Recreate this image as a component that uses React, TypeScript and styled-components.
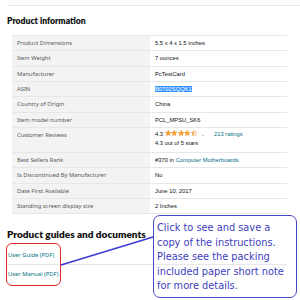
import styled, { createGlobalStyle } from 'styled-components';

const GlobalStyle = createGlobalStyle`
  html, body {
    margin: 0;
    padding: 0;
    background: #fff;
  }
`;

const Page = styled.div`
  position: relative;
  width: 300px;
  height: 300px;
  overflow: hidden;
  box-sizing: border-box;
  padding: 5px 0 0 7px;
  font-family: "Noto Sans", "Open Sans", sans-serif;
`;

const TopRule = styled.div`
  border-top: 1px solid #e7e7e7;
`;

const SectionTitle = styled.h2`
  margin: 9px 0 0;
  font-family: Lato, "Noto Sans", sans-serif;
  font-size: 8.6px;
  line-height: 12px;
  font-weight: 800;
  color: #0f1111;
`;

const GuidesTitle = styled.h2`
  margin: 13px 0 0;
  font-family: Lato, "Noto Sans", sans-serif;
  font-size: 10px;
  line-height: 14px;
  font-weight: 800;
  color: #0f1111;
`;

const Table = styled.div`
  margin: 8px 0 0 5px;
  width: 275px;
  border-top: 1px solid #e7e7e7;
`;

const Row = styled.div<{ $tall?: boolean }>`
  display: grid;
  grid-template-columns: 138px 1fr;
  height: ${(p) => (p.$tall ? '24px' : '14.33px')};
  border-bottom: 1px solid #e7e7e7;
`;

const Label = styled.div`
  background: #f3f3f3;
  color: #565959;
  font-size: 5.8px;
  line-height: 14.33px;
  padding-left: 5px;
  white-space: nowrap;
`;

const Value = styled.div`
  font-family: "Liberation Sans", Arial, sans-serif;
  font-size: 5.8px;
  line-height: 14.33px;
  color: #0f1111;
  padding-left: 5px;
  white-space: nowrap;
`;

const Selected = styled.span`
  background: #3390ff;
  color: #fff;
`;

const Link = styled.a`
  color: #007185;
  text-decoration: none;
`;

const ReviewLine = styled.div`
  display: flex;
  align-items: center;
  gap: 2px;
  height: 9px;
  margin-top: 2px;
`;

const SubLine = styled.div`
  line-height: 9px;
`;

const Chevron = styled.span`
  color: #888;
  font-size: 5px;
  margin: 0 7px 0 2px;
`;

const Guides = styled.div`
  margin-top: 5px;
  width: 280px;
`;

const GuideItem = styled.div<{ $first?: boolean }>`
  font-size: 5.8px;
  line-height: 18px;
  padding-left: 1px;
  border-bottom: ${(p) => (p.$first ? '1px solid #e7e7e7' : 'none')};
`;

const RedBox = styled.div`
  position: absolute;
  left: 6px;
  top: 243px;
  width: 53px;
  height: 41px;
  border: 1.6px solid #e3262b;
  border-radius: 6px;
`;

const Callout = styled.div`
  position: absolute;
  left: 153px;
  top: 215px;
  width: 144px;
  height: 83px;
  border: 1.6px solid #4747c9;
  border-radius: 7px;
  padding: 5px 0 0 3px;
  box-sizing: border-box;
  font-family: "DejaVu Sans", Verdana, sans-serif;
  font-size: 9.8px;
  line-height: 14.5px;
  color: #3d3dbd;
  white-space: nowrap;
`;

const Overlay = styled.svg`
  position: absolute;
  left: 0;
  top: 0;
  pointer-events: none;
`;

const Star = ({ fill }: { fill: number }) => (
  <svg width="6.4" height="6" viewBox="0 0 20 19">
    <defs>
      <linearGradient id={`s${fill}`}>
        <stop offset={`${fill * 100}%`} stopColor="#ffa41c" />
        <stop offset={`${fill * 100}%`} stopColor="#fff" />
      </linearGradient>
    </defs>
    <polygon
      points="10,1 12.6,7 19,7.3 14,11.5 15.7,18 10,14.3 4.3,18 6,11.5 1,7.3 7.4,7"
      fill={`url(#s${fill})`}
      stroke="#de7921"
      strokeWidth="1.2"
    />
  </svg>
);

const rows: [string, React.ReactNode][] = [
  ['Product Dimensions', '5.5 x 4 x 1.5 inches'],
  ['Item Weight', '7 ounces'],
  ['Manufacturer', 'PcTestCard'],
  ['ASIN', <Selected>B0702SQQK1</Selected>],
  ['Country of Origin', 'China'],
  ['Item model number', 'PCL_MPSU_SK6'],
];

const rowsAfter: [string, React.ReactNode][] = [
  ['Best Sellers Rank', <>#370 in <Link>Computer Motherboards</Link></>],
  ['Is Discontinued By Manufacturer', 'No'],
  ['Date First Available', 'June 10, 2017'],
  ['Standing screen display size', '2 Inches'],
];

export default function App() {
  return (
    <>
      <GlobalStyle />
      <Page>
        <TopRule />
        <SectionTitle>Product information</SectionTitle>
        <Table>
          {rows.map(([k, v]) => (
            <Row key={k}>
              <Label>{k}</Label>
              <Value>{v}</Value>
            </Row>
          ))}
          <Row $tall>
            <Label>Customer Reviews</Label>
            <Value>
              <ReviewLine>
                <span>4.3</span>
                <span>
                  <Star fill={1} />
                  <Star fill={1} />
                  <Star fill={1} />
                  <Star fill={1} />
                  <Star fill={0.5} />
                </span>
                <Chevron>⌄</Chevron>
                <Link>213 ratings</Link>
              </ReviewLine>
              <SubLine>4.3 out of 5 stars</SubLine>
            </Value>
          </Row>
          {rowsAfter.map(([k, v]) => (
            <Row key={k}>
              <Label>{k}</Label>
              <Value>{v}</Value>
            </Row>
          ))}
        </Table>
        <GuidesTitle>Product guides and documents</GuidesTitle>
        <Guides>
          <GuideItem $first>
            <Link>User Guide (PDF)</Link>
          </GuideItem>
          <GuideItem>
            <Link>User Manual (PDF)</Link>
          </GuideItem>
        </Guides>
        <RedBox />
        <Overlay width="300" height="300">
          <line x1="61" y1="265" x2="153" y2="237" stroke="#3b3bd8" strokeWidth="1.5" />
        </Overlay>
        <Callout>
          Click to see and save a
          <br />
          copy of the instructions.
          <br />
          Please see the packing
          <br />
          included paper short note
          <br />
          for more details.
        </Callout>
      </Page>
    </>
  );
}
